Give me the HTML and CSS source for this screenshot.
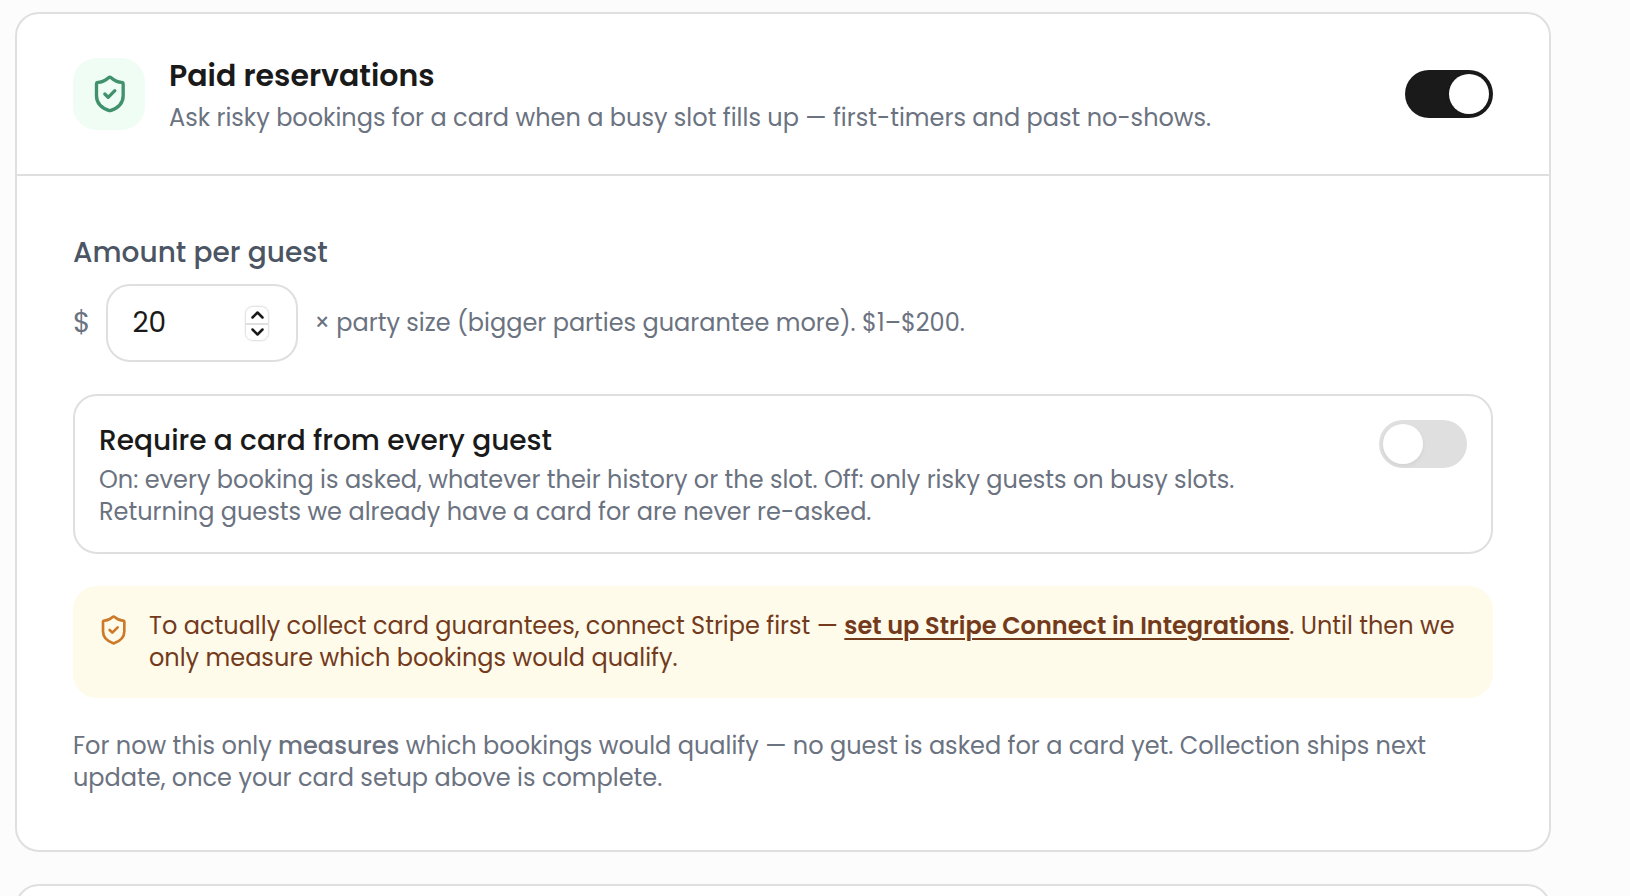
FILE: index.html
```html
<!DOCTYPE html>
<html lang="en">
<head>
  <meta charset="UTF-8" />
  <meta name="viewport" content="width=device-width, initial-scale=1.0" />
  <title>Paid reservations</title>
  <link rel="stylesheet" href="styles.css">
</head>
<body>
  <main class="page">
    <section class="card">
      <!-- Card header with main switch -->
      <header class="card-header">
        <div class="card-icon">
          <svg viewBox="-0.5 0 24 24" aria-hidden="true">
            <path d="M20 13c0 5-3.5 7.5-7.66 8.95a1 1 0 0 1-.67-.01C7.5 20.5 4 18 4 13V6a1 1 0 0 1 1-1c2 0 4.5-1.2 6.24-2.72a1.17 1.17 0 0 1 1.52 0C14.51 3.81 17 5 19 5a1 1 0 0 1 1 1z" />
            <path d="m9 12 2 2 4-4" />
          </svg>
        </div>
        <div class="card-heading">
          <h2 id="paidTitle">Paid reservations</h2>
          <p class="text">Ask risky bookings for a card when a busy slot fills up — first-timers and past no-shows.</p>
        </div>
        <input type="checkbox" class="switch" id="paidSwitch" role="switch" aria-labelledby="paidTitle" checked />
      </header>

      <div class="card-body">
        <!-- Amount -->
        <div class="field">
          <label for="amount">Amount per guest</label>
          <div class="amount-row">
            <span class="currency">$</span>
            <div class="number-box">
              <input type="number" id="amount" min="1" max="200" value="20" />
              <div class="stepper">
                <button type="button" id="stepUp" aria-label="Increase">
                  <svg viewBox="0 0 12 8" aria-hidden="true"><path d="M2 6l4-4 4 4" /></svg>
                </button>
                <button type="button" id="stepDown" aria-label="Decrease">
                  <svg viewBox="0 0 12 8" aria-hidden="true"><path d="M2 2l4 4 4-4" /></svg>
                </button>
              </div>
            </div>
            <span class="text">× party size (bigger parties guarantee more). $1–$200.</span>
          </div>
        </div>

        <!-- Require card option -->
        <div class="option">
          <div class="option-text">
            <label for="requireSwitch">Require a card from every guest</label>
            <p class="text">On: every booking is asked, whatever their history or the slot. Off: only risky guests on busy slots. Returning guests we already have a card for are never re-asked.</p>
          </div>
          <input type="checkbox" class="switch" id="requireSwitch" role="switch" />
        </div>

        <!-- Stripe notice -->
        <div class="notice">
          <svg viewBox="-0.5 0 24 24" aria-hidden="true">
            <path d="M20 13c0 5-3.5 7.5-7.66 8.95a1 1 0 0 1-.67-.01C7.5 20.5 4 18 4 13V6a1 1 0 0 1 1-1c2 0 4.5-1.2 6.24-2.72a1.17 1.17 0 0 1 1.52 0C14.51 3.81 17 5 19 5a1 1 0 0 1 1 1z" />
            <path d="m9 12 2 2 4-4" />
          </svg>
          <p>To actually collect card guarantees, connect Stripe first — <a href="#integrations">set up Stripe Connect in Integrations</a>. Until then we only measure which bookings would qualify.</p>
        </div>

        <p class="text">For now this only <strong>measures</strong> which bookings would qualify — no guest is asked for a card yet. Collection ships next update, once your card setup above is complete.</p>
      </div>
    </section>

    <section class="card card-next"></section>
  </main>

  <script>
    const amount = document.getElementById('amount');
    document.getElementById('stepUp').addEventListener('click', () => amount.stepUp());
    document.getElementById('stepDown').addEventListener('click', () => amount.stepDown());
  </script>
</body>
</html>
```
FILE: styles.css
```css
/* Global Styles */
* {
  box-sizing: border-box;
}
html {
  scrollbar-width: none;
}
body {
  margin: 0;
  background: #fcfcfc;
  color: #1a1a1a;
  font-family: Poppins, Inter, sans-serif;
  font-size: 24px;
  line-height: 32px;
}
h2, p {
  margin: 0;
}
svg {
  display: block;
  flex: none;
  fill: none;
  stroke: currentColor;
  stroke-width: 2;
  stroke-linecap: round;
  stroke-linejoin: round;
}
.page {
  display: flex;
  flex-direction: column;
  gap: 32px;
  padding: 12px 79px 0 15px;
}
.text {
  color: #6b7280;
}
.text strong {
  font-weight: 500;
}
/* Card */
.card {
  background: #fff;
  border: 2px solid #dfdfdf;
  border-radius: 24px;
}
.card-next {
  min-height: 160px;
}
.card-header {
  display: flex;
  align-items: center;
  gap: 24px;
  padding: 40px 56px;
  border-bottom: 2px solid #dfdfdf;
}
.card-icon {
  display: flex;
  align-items: center;
  justify-content: center;
  flex: none;
  width: 72px;
  height: 72px;
  border-radius: 24px;
  background: #f0fdf4;
  color: #40916c;
}
.card-icon svg {
  width: 40px;
  height: 40px;
}
.card-heading {
  flex: 1;
}
.card-heading h2 {
  margin-bottom: 4px;
  font-size: 30px;
  font-weight: 600;
  line-height: 44px;
}
.card-body {
  display: flex;
  flex-direction: column;
  gap: 32px;
  padding: 56px;
}
/* Switch */
.switch {
  appearance: none;
  flex: none;
  width: 88px;
  height: 48px;
  margin: 0;
  padding: 4px;
  border-radius: 24px;
  background: #dfdfdf;
  cursor: pointer;
}
.switch::before {
  content: "";
  display: block;
  width: 40px;
  height: 40px;
  border-radius: 50%;
  background: #fff;
  box-shadow: 0 2px 4px rgba(0, 0, 0, 0.06);
}
.switch:checked {
  background: #1a1a1a;
}
.switch:checked::before {
  margin-left: auto;
}
/* Amount field */
.field label {
  display: block;
  margin-bottom: 10px;
  color: #4b5563;
  font-size: 28px;
  font-weight: 500;
  line-height: 42px;
}
.amount-row {
  display: flex;
  align-items: center;
  gap: 16px;
}
.currency {
  color: #6b7280;
  font-size: 28px;
}
.number-box {
  position: relative;
}
.number-box input {
  appearance: textfield;
  display: block;
  width: 192px;
  height: 78px;
  padding: 0 24px;
  border: 2px solid #dfdfdf;
  border-radius: 24px;
  background: #fff;
  color: #1a1a1a;
  font-family: inherit;
  font-size: 28px;
}
.number-box input::-webkit-inner-spin-button {
  display: none;
}
.stepper {
  position: absolute;
  top: 22px;
  right: 29px;
  display: flex;
  flex-direction: column;
  width: 24px;
  height: 35px;
  border: 1px solid #e4e4e4;
  border-radius: 8px;
  box-shadow: 0 0 2px rgba(0, 0, 0, 0.12);
}
.stepper button {
  display: flex;
  align-items: center;
  justify-content: center;
  flex: 1;
  padding: 0;
  border: none;
  background: none;
  color: #1a1a1a;
  cursor: pointer;
}
.stepper button + button {
  border-top: 2px solid #dfdfdf;
}
.stepper svg {
  width: 15px;
  height: 10px;
}
/* Require card option */
.option {
  display: flex;
  align-items: flex-start;
  gap: 32px;
  padding: 24px;
  border: 2px solid #dfdfdf;
  border-radius: 24px;
}
.option-text {
  flex: 1;
}
.option-text label {
  display: block;
  margin-bottom: 2px;
  font-size: 28px;
  font-weight: 500;
  line-height: 42px;
}
/* Notice */
.notice {
  display: flex;
  align-items: flex-start;
  gap: 20px;
  padding: 24px;
  border-radius: 24px;
  background: #fffbeb;
  color: #733a1c;
}
.notice svg {
  width: 32px;
  height: 32px;
  margin-top: 4px;
  color: #cc7a29;
}
.notice a {
  color: inherit;
  font-weight: 600;
  text-decoration-thickness: 2px;
  text-underline-offset: 4px;
}
```
